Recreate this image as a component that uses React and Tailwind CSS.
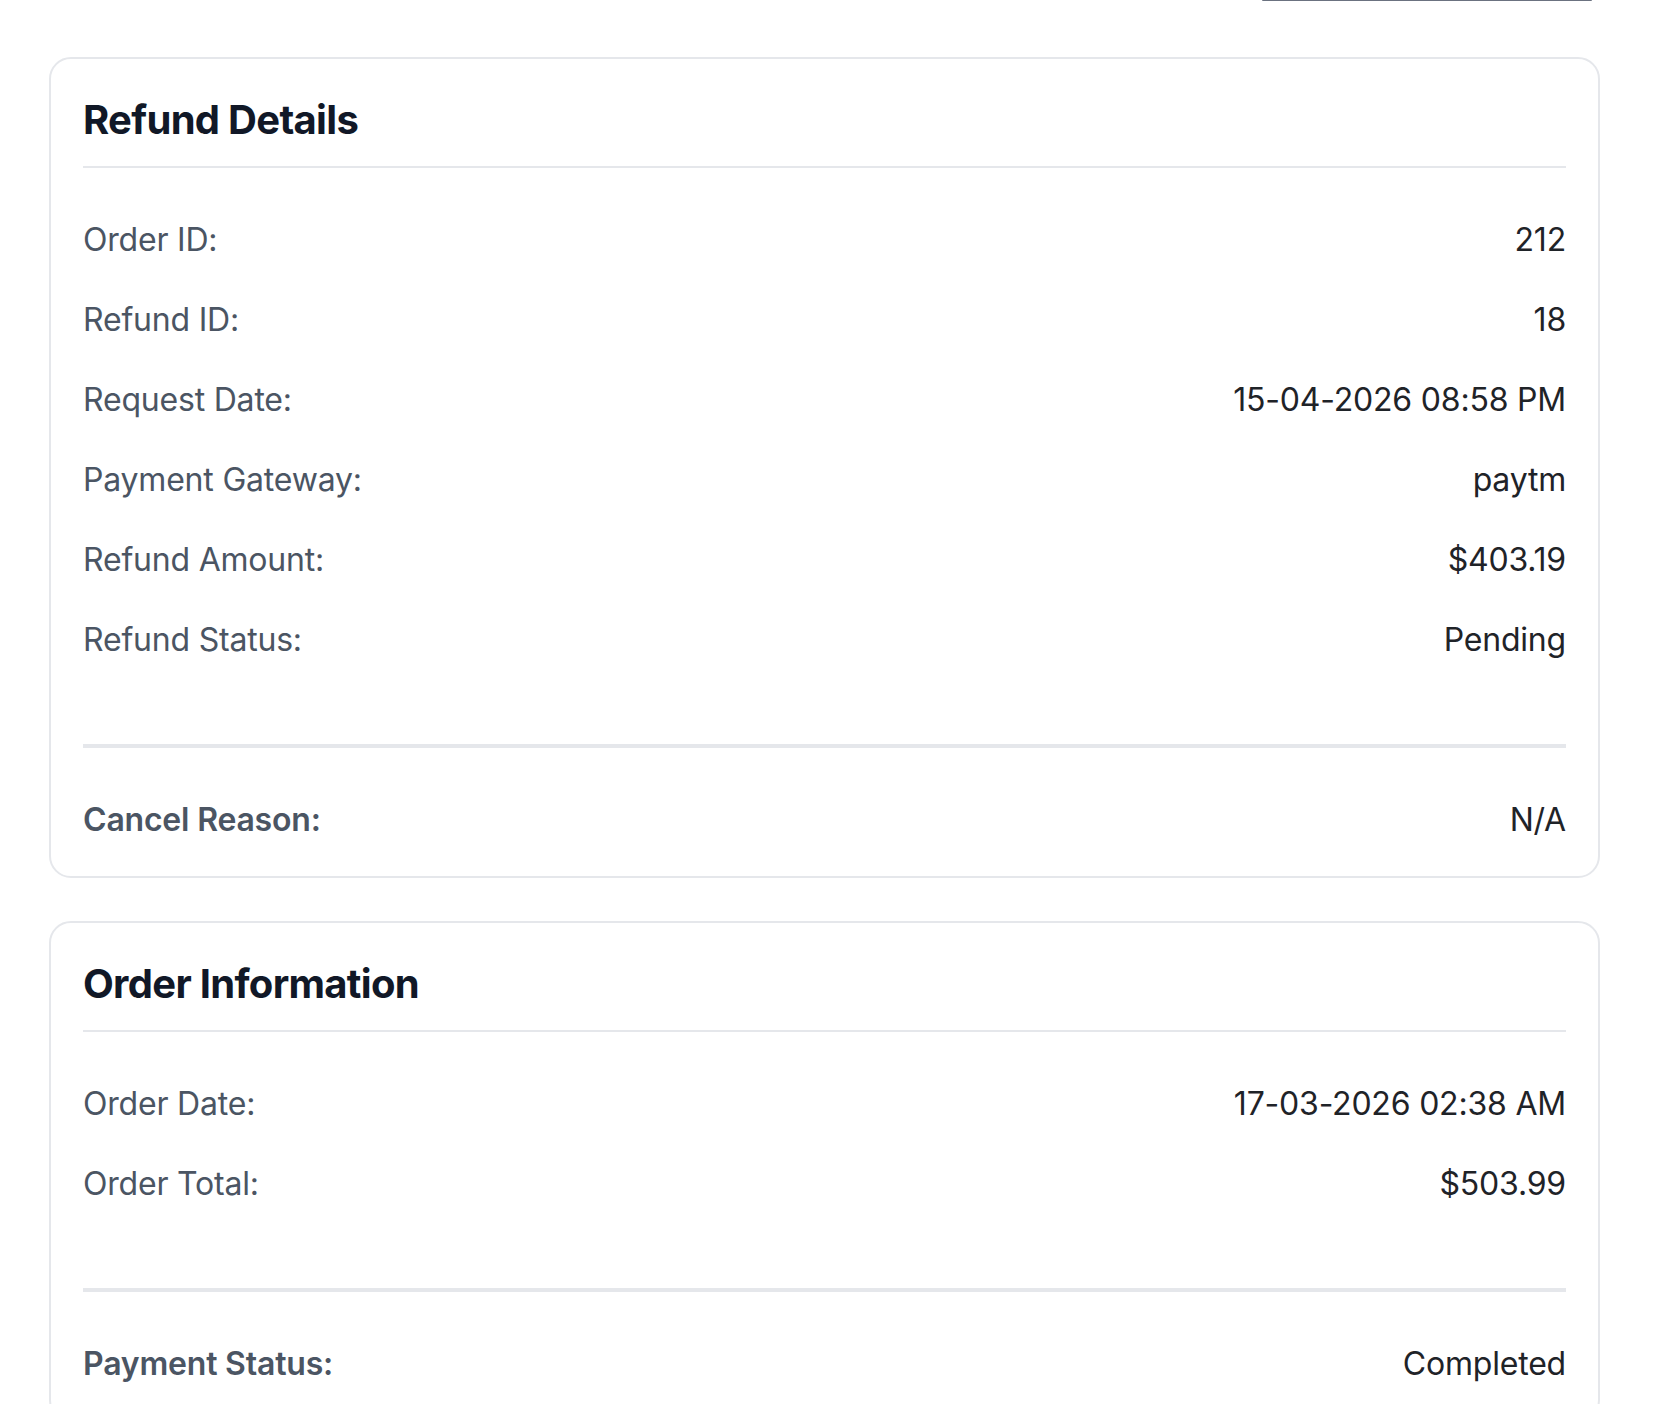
import React from "react";

const refundRows = [
  ["Order ID:", "212"],
  ["Refund ID:", "18"],
  ["Request Date:", "15-04-2026 08:58 PM"],
  ["Payment Gateway:", "paytm"],
  ["Refund Amount:", "$403.19"],
  ["Refund Status:", "Pending"],
];

const orderRows = [
  ["Order Date:", "17-03-2026 02:38 AM"],
  ["Order Total:", "$503.99"],
];

function Card({ title, rows, footLabel, footValue }) {
  return (
    <div className="rounded-[22px] border-2 border-[#e5e7eb] bg-white p-[32px]">
      <h2 className="border-b-2 border-[#e5e7eb] pt-[1px] pb-[18px] text-[40px] font-bold leading-[56px] tracking-[-0.7px] text-[#111827]">
        {title}
      </h2>
      <div className="mt-[32px]">
        {rows.map(([label, value]) => (
          <div key={label} className="flex items-center justify-between py-[16px] text-[32px] leading-[48px] tracking-[-0.2px]">
            <span className="text-[#4b5563]">{label}</span>
            <span className="text-[#1f2328]">{value}</span>
          </div>
        ))}
      </div>
      <div className="mt-[64px] flex items-center justify-between border-t-4 border-[#e5e7eb] pt-[48px] text-[32px] leading-[48px] tracking-[-0.2px]">
        <span className="font-semibold text-[#4b5563]">{footLabel}</span>
        <span className="text-[#1f2328]">{footValue}</span>
      </div>
    </div>
  );
}

export default function App() {
  return (
    <div
      className="min-h-[1404px] w-[1666px] overflow-hidden bg-white"
      style={{ fontFamily: "Inter, 'Noto Sans', sans-serif" }}
    >
      <div className="flex justify-end pr-[74px]">
        <div className="h-[1px] w-[330px] rounded-b-[2px] bg-[#6b7280]" />
      </div>
      <div className="ml-[49px] mt-[56px] flex w-[1551px] flex-col gap-[43px]">
        <Card title="Refund Details" rows={refundRows} footLabel="Cancel Reason:" footValue="N/A" />
        <Card title="Order Information" rows={orderRows} footLabel="Payment Status:" footValue="Completed" />
      </div>
    </div>
  );
}
